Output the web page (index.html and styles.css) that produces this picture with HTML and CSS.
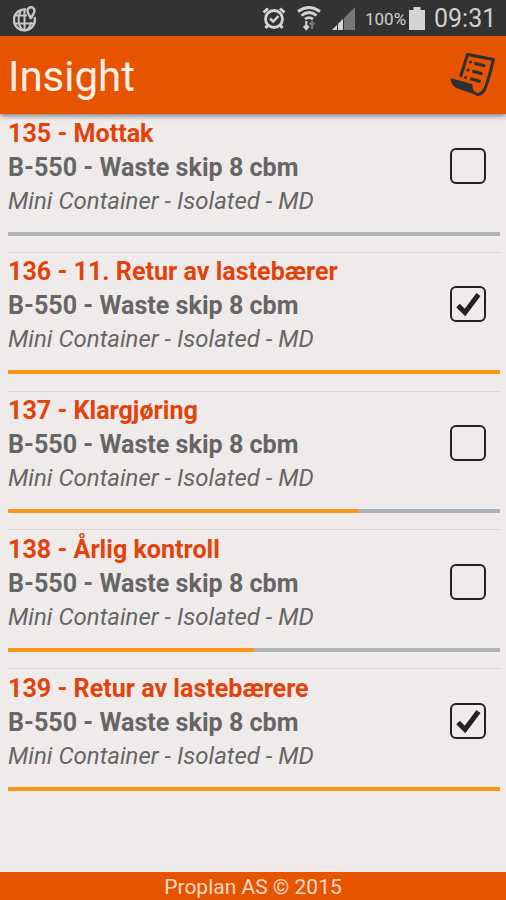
FILE: index.html
```html
<!DOCTYPE html>
<html lang="no">
  <head>
    <meta charset="UTF-8" />
    <meta name="viewport" content="width=device-width, initial-scale=1.0" />
    <title>Insight</title>
    <link rel="stylesheet" href="styles.css">
  </head>
  <body>
    <div class="status-bar">
      <svg class="globe" width="26" height="28" viewBox="0 0 26 28" fill="none" stroke="#c8c8c8" stroke-width="2">
        <path d="M13 4.500A10.500 10.500 0 1 0 21.500 12" stroke-width="2.400" />
        <path d="M8.500 5c-4 5-4 15 1 20M14 25c3-3 4-5 4-8M2 10.500h12M1.500 18.500h20M11.500 5v20" />
        <path d="M17.800 14c-1-4-3.300-5-3.300-8.300a3.500 3.500 0 0 1 7 0c0 3-2.800 4.500-3.700 8.300z" fill="#333" stroke-width="2.400" />
      </svg>
      <div class="status-icons">
        <svg width="24" height="26" viewBox="0 0 24 26" fill="none" stroke="#d4d4d4" stroke-width="2.800">
          <circle cx="12" cy="14" r="8.500" />
          <path d="M1.500 7.500L6 3.500M22.500 7.500L18 3.500M6 20l-2.500 3M18 20l2.500 3" stroke-width="3" />
          <path d="M8 13.500l3.200 3L16.500 11" stroke-width="2.400" />
        </svg>
        <svg class="wifi" width="24" height="26" viewBox="0 0 24 26" fill="none" stroke="#d4d4d4" stroke-width="2.800">
          <path d="M1 6.500Q12-1.500 23 6.500M4.500 10.500q7.500-6 15 0M8 14.200q4-3.200 8 0" />
          <path d="M9.300 16v8M6.800 21l2.500 3 2.500-3" stroke-width="2.200" />
          <path d="M15 24v-7M12.800 19.500L15 17l2.200 2.500" stroke="#777" stroke-width="2.200" />
        </svg>
        <svg class="signal" width="23" height="23" viewBox="0 0 23 23">
          <path d="M0 23L23 0v23z" fill="#777" />
          <path d="M0 23L11 12v11z" fill="#d4d4d4" />
          <path d="M5.500 16v7M11.500 10v13" stroke="#333" />
        </svg>
        <span class="percent">100%</span>
        <svg class="battery" width="16" height="23" viewBox="0 0 16 23" fill="#d4d4d4">
          <path d="M4.500 0h7v3H16v20H0V3h4.500z" />
        </svg>
        <span class="clock">09:31</span>
      </div>
    </div>

    <header>
      <h1>Insight</h1>
      <svg width="46" height="46" viewBox="0 0 46 46" fill="none" stroke="#2b3033" stroke-width="3" stroke-linejoin="round">
        <path d="M10.500 26L17.500 3.500 43.500 8.500C41 18 39 27 36 35c-2 6-5 9-10 8.500" />
        <path d="M1.500 28.500c1 5 3 7.500 8 8.500l17 6c-4-2-5-4-5-9l-9-2.500z" fill="#2b3033" stroke-width="2" />
        <path d="M25.500 12.500l8.500 2M23.500 20.500l8 2M21.500 28l8 2.200" stroke-linecap="round" />
        <path d="M20.500 11l.1 0M18 19l.1 0M15.500 26.500l.1 0" stroke-linecap="round" />
      </svg>
    </header>

    <main id="tasks"></main>

    <footer>Proplan AS © 2015</footer>

    <script>
      const titles = [
        "135 - Mottak",
        "136 - 11. Retur av lastebærer",
        "137 - Klargjøring",
        "138 - Årlig kontroll",
        "139 - Retur av lastebærere",
      ];
      const checked = [false, true, false, false, true];
      const progress = [0, 100, 71.4, 50, 100];

      const list = document.getElementById("tasks");

      // Add one row per task
      for (let i = 0; i < titles.length; i++) {
        const tick = checked[i]
          ? '<svg width="36" height="36" viewBox="0 0 36 36"><path d="M8 19.500l7 7L28.500 8.500" /></svg>'
          : "";
        list.innerHTML += `
          <div class="task">
            <div class="task-body">
              <div class="task-text">
                <h2>${titles[i]}</h2>
                <h3>B-550 - Waste skip 8 cbm</h3>
                <p>Mini Container - Isolated - MD</p>
              </div>
              <div class="checkbox">${tick}</div>
            </div>
            <div class="track"><div class="bar" style="width: ${progress[i]}%"></div></div>
          </div>`;
      }
    </script>
  </body>
</html>
```
FILE: styles.css
```css
* {
  box-sizing: border-box;
}
body {
  margin: 0;
  height: 900px;
  display: flex;
  flex-direction: column;
  overflow: hidden;
  font-family: Roboto, sans-serif;
  background-color: #efebea;
}
h1,
h2,
h3,
p {
  margin: 0;
  white-space: nowrap;
}

/* Status bar */
.status-bar {
  height: 36px;
  flex: none;
  display: flex;
  justify-content: space-between;
  padding: 0 11px 0 13px;
  background-color: #333;
  color: #d0d0d0;
}
.globe {
  margin-top: 5px;
}
.status-icons {
  display: flex;
  align-items: center;
}
.wifi {
  margin-left: 11px;
}
.signal {
  margin-left: 11px;
}
.percent {
  width: 41px;
  margin-left: 10px;
  font-size: 17px;
  line-height: 36px;
  padding-top: 2px;
}
.battery {
  margin-left: 3px;
}
.clock {
  width: 61px;
  margin-left: 9px;
  font-size: 25px;
  line-height: 36px;
  padding-top: 2px;
}

/* Title bar */
header {
  position: relative;
  height: 78px;
  flex: none;
  display: flex;
  align-items: center;
  justify-content: space-between;
  padding: 2px 10px 0 8px;
  background-color: #e65400;
  box-shadow: 0 2px 5px rgba(0, 0, 0, 0.45);
}
header svg {
  margin-bottom: 4px;
}
h1 {
  padding-top: 2px;
  color: #ffefe8;
  font-size: 42px;
  font-weight: 400;
  line-height: 50px;
}

/* Task list */
main {
  flex: 1;
  padding: 0 6px 0 8px;
}
.task {
  height: 138.75px;
  padding-top: 2.6px;
  border-bottom: 1px solid #d9d6d5;
}
.task:last-child {
  border-bottom: none;
}
.task-body {
  display: flex;
  justify-content: space-between;
}
h2,
h3,
p {
  font-size: 25.1px;
  line-height: 34px;
}
h2 {
  color: #e3420b;
  font-weight: 700;
}
h3 {
  color: #666;
  font-weight: 700;
}
p {
  color: #666;
  font-size: 24px;
  font-style: italic;
  font-weight: 400;
  line-height: 33px;
}
.checkbox {
  width: 36px;
  height: 36px;
  margin: 31px 14px 0 0;
  border: 2px solid #222;
  border-radius: 6px;
}
.checkbox svg {
  display: block;
  margin: -2px;
  fill: none;
  stroke: #222;
  stroke-width: 5;
}
.track {
  height: 4px;
  margin-top: 14px;
  background-color: #acb4b9;
}
.bar {
  height: 100%;
  background-color: #fa9517;
}

footer {
  height: 28px;
  flex: none;
  background-color: #e65400;
  color: #ffd9c8;
  font-size: 21px;
  line-height: 31px;
  text-align: center;
}
```
